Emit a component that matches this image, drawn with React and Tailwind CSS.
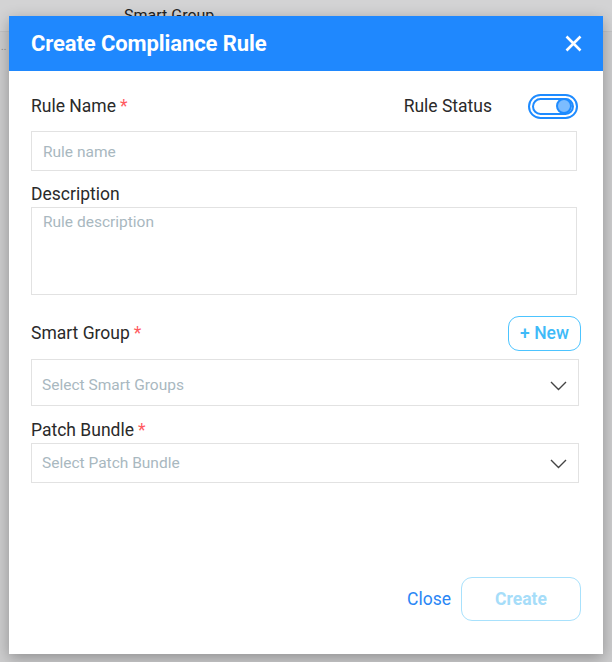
import { useState } from 'react';

function Required() {
  return <span className="ml-1 text-[#ff5a5f]">*</span>;
}

function Chevron() {
  return (
    <svg width="17" height="10" viewBox="0 0 17 10" fill="none" className="shrink-0">
      <path d="M1 1l7.5 7.5L16 1" stroke="#444" strokeWidth="1.4" />
    </svg>
  );
}

function Toggle({ on, onChange }) {
  return (
    <button
      type="button"
      onClick={() => onChange(!on)}
      className="flex h-[25px] w-[50px] items-center rounded-full border-2 border-[#1e8bff] bg-white p-[2px]"
    >
      <span className="flex h-full w-full items-center justify-end rounded-full border-2 border-[#1e8bff]">
        <span className="h-[16px] w-[16px] rounded-full border-2 border-[#1e8bff] bg-[#7cbcff]" />
      </span>
    </button>
  );
}

export default function App() {
  const [active, setActive] = useState(true);

  return (
    <div className="relative h-[662px] w-[612px] overflow-hidden bg-[#cdcdce] font-['Roboto',sans-serif]">
      {/* page behind the overlay */}
      <div className="h-[32px] border-b border-[#c4c4c5] bg-[#d3d3d4] pl-[124px] pt-[4px] text-[16px] text-[#222]">
        Smart Group
      </div>
      <div className="pl-[1px] pt-[10px] text-[10px] leading-none text-[#888]">..</div>

      {/* Modal */}
      <div className="absolute left-[9px] top-[16px] flex h-[638px] w-[594px] flex-col bg-white shadow-[0_4px_14px_rgba(0,0,0,0.3)]">
        <header className="flex h-[55px] items-center justify-between bg-[#1f88fe] pl-[22px] pr-[21px]">
          <h1 className="text-[22px] font-bold tracking-[-0.1px] text-white">Create Compliance Rule</h1>
          <svg width="17" height="17" viewBox="0 0 17 17" fill="none">
            <path d="M1.5 1.5l14 14M15.5 1.5l-14 14" stroke="white" strokeWidth="2.6" />
          </svg>
        </header>

        <div className="flex flex-1 flex-col px-[22px] text-[#2a2a2a]">
          <div className="mt-[22px] flex h-[26px] items-center justify-between pr-[3px]">
            <label className="text-[17.5px]">
              Rule Name
              <Required />
            </label>
            <div className="flex items-center gap-[36px]">
              <span className="text-[17.5px]">Rule Status</span>
              <Toggle on={active} onChange={setActive} />
            </div>
          </div>
          <input
            placeholder="Rule name"
            className="mt-[12px] h-[40px] w-[546px] border border-[#e2e2e2] px-[11px] pt-[2px] text-[15.5px] outline-none placeholder:text-[#a9b8bf]"
          />

          <label className="mt-[12px] text-[17.5px] leading-[22px]">Description</label>
          <textarea
            placeholder="Rule description"
            className="mt-[2px] h-[88px] w-[546px] resize-none border border-[#e2e2e2] px-[11px] py-[3px] text-[15.5px] outline-none placeholder:text-[#a9b8bf]"
          />

          <div className="mt-[21px] flex h-[35px] items-center justify-between">
            <label className="text-[17.5px]">
              Smart Group
              <Required />
            </label>
            <button
              type="button"
              className="h-[35px] w-[73px] rounded-[11px] border border-[#4cc4ff] text-[17.5px] font-medium text-[#3fbaf8]"
            >
              + New
            </button>
          </div>
          <div className="mt-[8px] flex h-[47px] w-[548px] items-center justify-between border border-[#e2e2e2] pl-[10px] pr-[11px] pt-[7px]">
            <span className="text-[15.5px] text-[#a9b8bf]">Select Smart Groups</span>
            <Chevron />
          </div>

          <label className="mt-[12px] text-[17.5px] leading-[24px]">
            Patch Bundle
            <Required />
          </label>
          <div className="mt-[1px] flex h-[40px] w-[548px] items-center justify-between border border-[#e2e2e2] pl-[10px] pr-[11px] pt-[1px]">
            <span className="text-[15.5px] text-[#a9b8bf]">Select Patch Bundle</span>
            <Chevron />
          </div>

          <div className="mt-auto mb-[33px] flex items-center justify-end gap-[10px]">
            <button type="button" className="text-[17.5px] text-[#2a86f5]">
              Close
            </button>
            <button
              type="button"
              className="h-[44px] w-[120px] rounded-[11px] border border-[#a8e1fc] text-[17.5px] font-bold text-[#a6ddf9]"
            >
              Create
            </button>
          </div>
        </div>
      </div>
    </div>
  );
}
